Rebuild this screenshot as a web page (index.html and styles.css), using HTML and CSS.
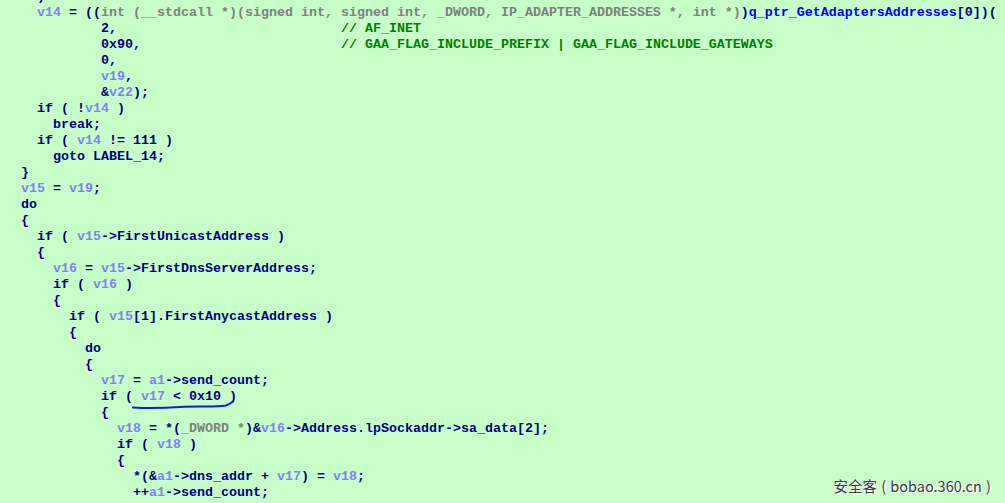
FILE: index.html
```html
<!DOCTYPE html>
<html>
<head>
<meta charset="utf-8">
<link rel="stylesheet" href="styles.css">
</head>
<body>
<div class="view">
<pre class="code"><span class="c4">)</span>
<span class="c4"><span class="v">v14</span> = ((<span class="t">int (__stdcall *)(signed int, signed int, _DWORD, IP_ADAPTER_ADDRESSES *, int *)</span>)<span class="f">q_ptr_GetAdaptersAddresses</span>[0])(</span>
<span class="c12">2,                            <span class="cm">// AF_INET</span></span>
<span class="c12">0x90,                         <span class="cm">// GAA_FLAG_INCLUDE_PREFIX | GAA_FLAG_INCLUDE_GATEWAYS</span></span>
<span class="c12">0,</span>
<span class="c12"><span class="v">v19</span>,</span>
<span class="c12">&amp;<span class="v">v22</span>);</span>
<span class="c4">if ( !<span class="v">v14</span> )</span>
<span class="c6">break;</span>
<span class="c4">if ( <span class="v">v14</span> != 111 )</span>
<span class="c6">goto LABEL_14;</span>
<span class="c2">}</span>
<span class="c2"><span class="v">v15</span> = <span class="v">v19</span>;</span>
<span class="c2">do</span>
<span class="c2">{</span>
<span class="c4">if ( <span class="v">v15</span>-&gt;FirstUnicastAddress )</span>
<span class="c4">{</span>
<span class="c6"><span class="v">v16</span> = <span class="v">v15</span>-&gt;FirstDnsServerAddress;</span>
<span class="c6">if ( <span class="v">v16</span> )</span>
<span class="c6">{</span>
<span class="c8">if ( <span class="v">v15</span>[1].FirstAnycastAddress )</span>
<span class="c8">{</span>
<span class="c10">do</span>
<span class="c10">{</span>
<span class="c12"><span class="v">v17</span> = <span class="v">a1</span>-&gt;send_count;</span>
<span class="c12">if ( <span class="v">v17</span> &lt; 0x10 )</span>
<span class="c12">{</span>
<span class="c14"><span class="v">v18</span> = *(<span class="t">_DWORD *</span>)&amp;<span class="v">v16</span>-&gt;Address.lpSockaddr-&gt;sa_data[2];</span>
<span class="c14">if ( <span class="v">v18</span> )</span>
<span class="c14">{</span>
<span class="c16">*(&amp;<span class="v">a1</span>-&gt;dns_addr + <span class="v">v17</span>) = <span class="v">v18</span>;</span>
<span class="c16">++<span class="v">a1</span>-&gt;send_count;</span>
</pre>
<svg class="mark" width="1005" height="503" viewBox="0 0 1005 503">
<path d="M133 407.5 C150 408.5 165 408 180 407 C200 406 215 407.5 226 405.5 C229 404.5 231 403 233 401.5" fill="none" stroke="#0a1fe0" stroke-width="2" stroke-linecap="round"/>
</svg>
<div class="wm">安全客 ( bobao.360.cn )</div>
</div>
</body>
</html>
```
FILE: styles.css
```css
html, body {
  margin: 0;
  padding: 0;
  background: #c8ffc8;
}
.view {
  position: relative;
  width: 1005px;
  height: 503px;
  overflow: hidden;
  background: #c8ffc8;
}
.code {
  margin: -11px 0 0 0;
  padding-left: 5px;
  font-family: "Liberation Mono", monospace;
  font-weight: bold;
  font-size: 13.333px;
  line-height: 16px;
  color: #000080;
  white-space: pre;
}
.c2 { padding-left: 16px; }
.c4 { padding-left: 32px; }
.c6 { padding-left: 48px; }
.c8 { padding-left: 64px; }
.c10 { padding-left: 80px; }
.c12 { padding-left: 96px; }
.c14 { padding-left: 112px; }
.c16 { padding-left: 128px; }
.v { color: #8080ff; }
.t { color: #808080; }
.f { color: #0000ff; }
.cm { color: #008000; }
.mark {
  position: absolute;
  left: 0;
  top: 0;
  pointer-events: none;
}
.wm {
  position: absolute;
  right: 14px;
  bottom: 9px;
  font-family: "Noto Sans CJK SC", "Noto Sans", sans-serif;
  font-size: 14.5px;
  line-height: 17px;
  color: #3a3a3a;
  word-spacing: 1px;
  text-shadow: 1px 1px 0 #fff, -1px 0 0 #eee;
}
```
